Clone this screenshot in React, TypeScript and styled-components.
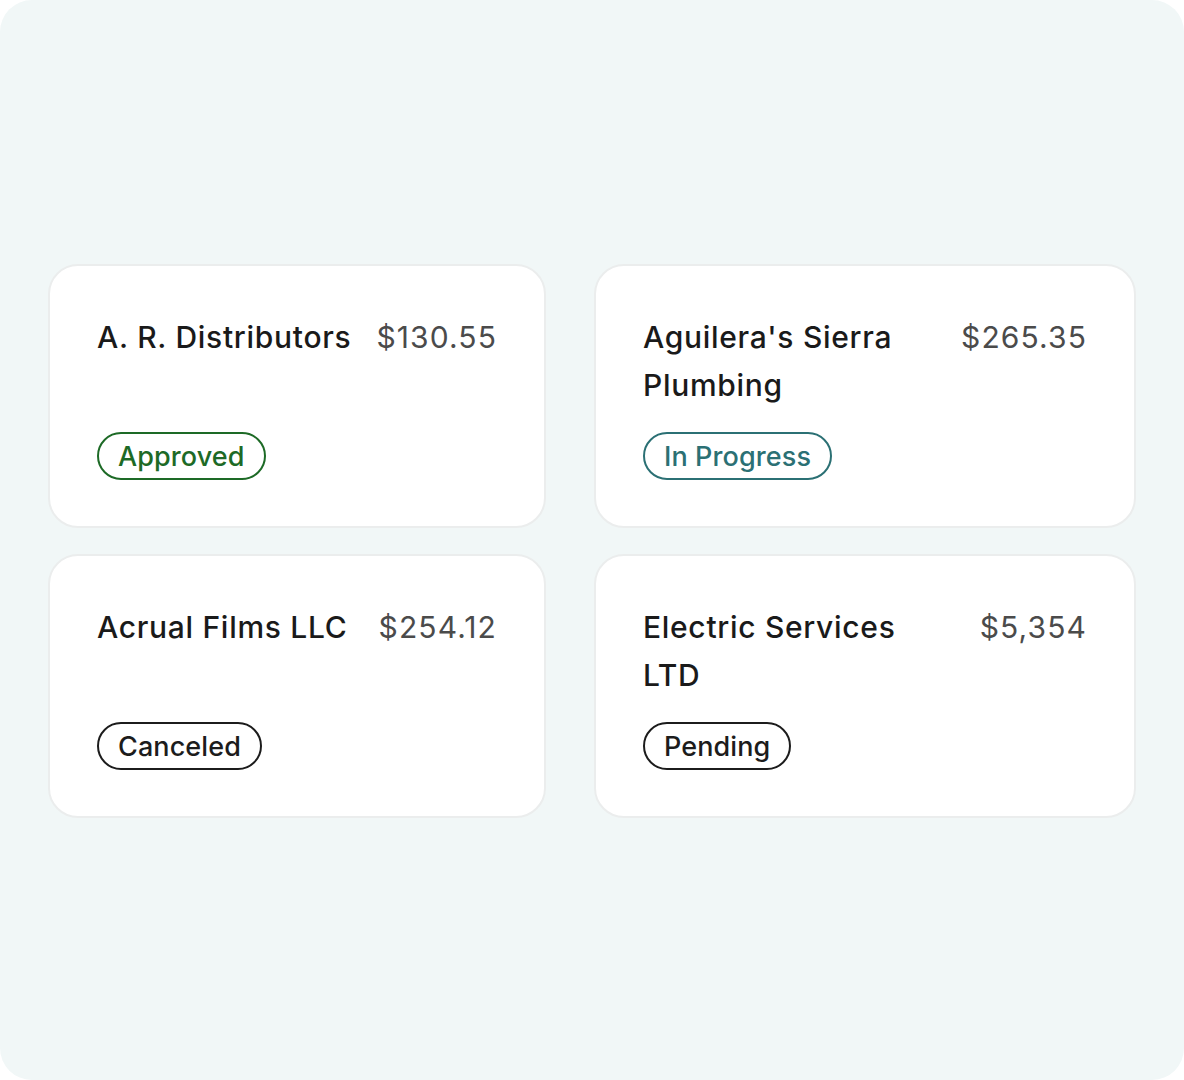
import React from "react";
import styled, { createGlobalStyle } from "styled-components";

type Status = "approved" | "progress" | "canceled" | "pending";

interface Invoice {
  name: string;
  amount: string;
  status: Status;
  label: string;
}

const invoices: Invoice[] = [
  { name: "A. R. Distributors", amount: "$130.55", status: "approved", label: "Approved" },
  { name: "Aguilera's Sierra Plumbing", amount: "$265.35", status: "progress", label: "In Progress" },
  { name: "Acrual Films LLC", amount: "$254.12", status: "canceled", label: "Canceled" },
  { name: "Electric Services LTD", amount: "$5,354", status: "pending", label: "Pending" },
];

const statusColors: Record<Status, string> = {
  approved: "#1d6a26",
  progress: "#2b7074",
  canceled: "#1c1c1c",
  pending: "#1c1c1c",
};

const GlobalStyle = createGlobalStyle`
  html, body {
    margin: 0;
    padding: 0;
    background: #ffffff;
  }
  body {
    font-family: Inter, "Noto Sans", "Liberation Sans", sans-serif;
    -webkit-font-smoothing: antialiased;
  }
`;

const Page = styled.div`
  width: 1184px;
  height: 1080px;
  box-sizing: border-box;
  background: #f1f7f7;
  border-radius: 32px;
  display: flex;
  align-items: center;
  justify-content: center;
  padding-top: 2px;
`;

const Grid = styled.div`
  display: grid;
  grid-template-columns: 498px 542px;
  column-gap: 48px;
  row-gap: 26px;
`;

const Card = styled.div`
  box-sizing: border-box;
  background: #ffffff;
  border: 2px solid #ebeded;
  border-radius: 30px;
  padding: 47px 47px 46px;
  display: flex;
  flex-direction: column;
  gap: 23px;
`;

const Header = styled.div`
  display: flex;
  justify-content: space-between;
  align-items: flex-start;
  gap: 24px;
  min-height: 96px;
`;

const Name = styled.div`
  font-size: 30px;
  line-height: 48px;
  font-weight: 500;
  color: #1a1a1a;
  max-width: 272px;
  letter-spacing: 0.7px;
`;

const Amount = styled.div`
  font-size: 30px;
  line-height: 48px;
  font-weight: 400;
  color: #4b4b4b;
  white-space: nowrap;
  letter-spacing: 1.1px;
`;

const Badge = styled.span<{ $status: Status }>`
  align-self: flex-start;
  box-sizing: border-box;
  height: 48px;
  padding: 0 19px;
  border: 2px solid ${(p) => statusColors[p.$status]};
  border-radius: 24px;
  color: ${(p) => statusColors[p.$status]};
  font-size: 27px;
  font-weight: 500;
  letter-spacing: 0.1px;
  display: inline-flex;
  align-items: center;
`;

const App: React.FC = () => (
  <>
    <GlobalStyle />
    <Page>
      <Grid>
        {invoices.map((inv) => (
          <Card key={inv.name}>
            <Header>
              <Name>{inv.name}</Name>
              <Amount>{inv.amount}</Amount>
            </Header>
            <Badge $status={inv.status}>{inv.label}</Badge>
          </Card>
        ))}
      </Grid>
    </Page>
  </>
);

export default App;
